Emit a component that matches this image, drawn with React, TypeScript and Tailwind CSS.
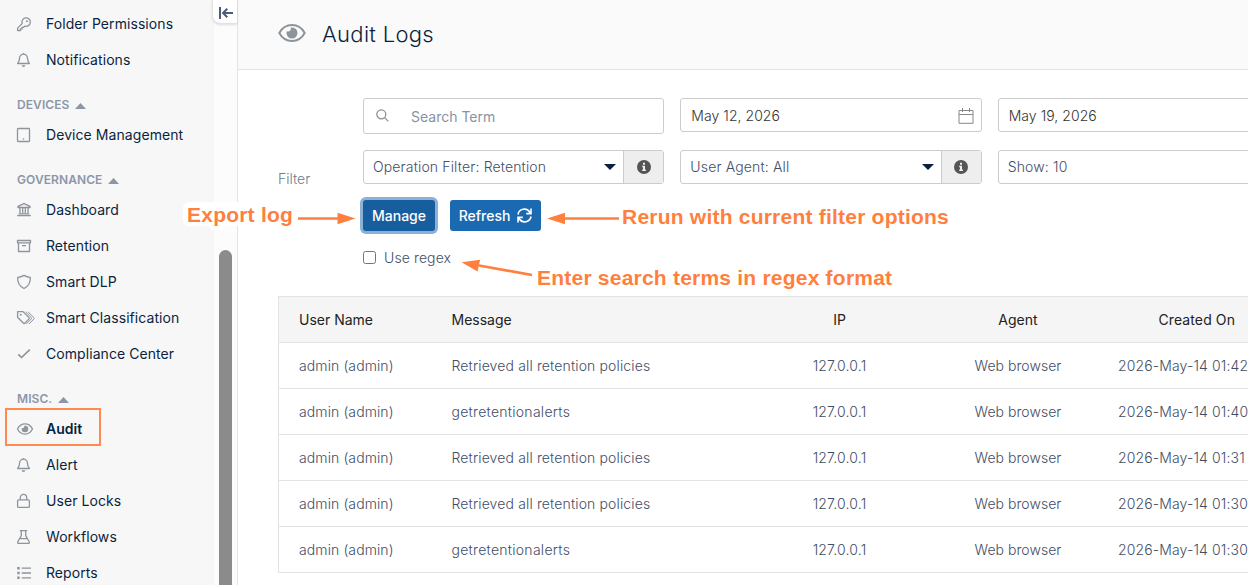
import React from "react";

type IconName =
  | "key"
  | "bell"
  | "tablet"
  | "landmark"
  | "archive"
  | "shield"
  | "tags"
  | "check"
  | "eye"
  | "lock"
  | "flask"
  | "list";

const icons: Record<IconName, React.ReactNode> = {
  key: (
    <>
      <path d="M6.2 7.600a4.200 4.200 0 1 1 2.600 2.500L7.600 11.300H6.100v1.600H4.500v1.600H1.600v-2.400z" />
      <circle cx="11" cy="5.200" r="1" fill="currentColor" stroke="none" />
    </>
  ),
  bell: (
    <>
      <path d="M7.500 1v1.200M7.500 2.200a4 4 0 0 0-4 4c0 2.500-.5 3.600-1.900 5.300h11.800c-1.400-1.700-1.900-2.800-1.900-5.300a4 4 0 0 0-4-4z" />
      <path d="M5.700 13.200h3.600a1.800 1.700 0 0 1-3.600 0z" fill="currentColor" stroke="none" />
    </>
  ),
  tablet: (
    <>
      <rect x="1.500" y="1.500" width="12" height="13" rx="0.800" />
      <path d="M6.800 12h1.400" />
    </>
  ),
  landmark: (
    <>
      <path d="M2 5.500V4.400L8 1.600l6 2.800v1.100zM1.200 13.600h13.600M2.500 11.800h11" />
      <path d="M4 6v5.500M6.700 6v5.500M9.300 6v5.500M12 6v5.500" />
    </>
  ),
  archive: (
    <path d="M1.500 2.500h13v2.400h-13zM2.500 5v8.500h11V5M6 7.600h4" />
  ),
  shield: (
    <path d="M8 1.400c1.800 1.200 3.800 1.900 6.300 2 .3 4.700-1.700 8.800-6.300 11.100C3.400 12.200 1.400 8.100 1.700 3.400c2.500-.1 4.500-.8 6.300-2z" />
  ),
  tags: (
    <>
      <path d="M1.600 1.600h5.400l6 6c.4.4.4.9 0 1.300l-4.200 4.300c-.4.4-.9.4-1.300 0l-5.900-6z" />
      <path d="M9.300 1.600l6 6c.4.4.4.9 0 1.300l-4.900 5M12 1.800l6 5.900c.4.4.4.8 0 1.200l-4.900 5" strokeWidth="1" />
      <circle cx="4.700" cy="4.700" r="1" fill="currentColor" stroke="none" />
    </>
  ),
  check: <path d="M2.300 8.300l3.200 3.200 8.300-7.900" strokeWidth="1.700" />,
  eye: (
    <>
      <path d="M1.500 8C3 5 5.700 2.900 9 2.900S15 5 16.500 8C15 11 12.300 13.100 9 13.100S3 11 1.500 8z" />
      <path d="M9 4.700A3.300 3.300 0 1 1 5.700 8c0-.3 0-.6.1-.9 1.500.5 3-.8 2.400-2.300.3-.1.500-.1.800-.1z" fill="currentColor" stroke="none" />
    </>
  ),
  lock: (
    <>
      <rect x="1.600" y="6.800" width="11.800" height="7.600" rx="1" />
      <path d="M4.300 6.800V4.600a3.200 3.200 0 0 1 6.400 0v2.200" />
    </>
  ),
  flask: (
    <path d="M3.800 1.600h7.400M5.300 1.600v5L1.800 12.800c-.4.8 0 1.600.9 1.600h9.600c.9 0 1.300-.8.900-1.600L9.700 6.600v-5M4 9.600h7" />
  ),
  list: (
    <>
      <path d="M5.700 3.200h9.300M5.700 8H15M5.700 12.800H15" />
      <path d="M1.200 2h2.500v2.400H1.200zM1.200 6.800h2.500v2.400H1.200zM1.200 11.600h2.500V14H1.200z" fill="currentColor" stroke="none" />
    </>
  ),
};

const SideIcon = ({ name }: { name: IconName }) => (
  <svg
    className="w-5 h-4 mr-2.5 shrink-0 text-[#8d949c]"
    viewBox="0 0 20 16"
    fill="none"
    stroke="currentColor"
    strokeWidth="1.300"
    strokeLinejoin="round"
  >
    {icons[name]}
  </svg>
);

const sections: { title?: string; items: { label: string; icon: IconName }[] }[] = [
  {
    items: [
      { label: "Folder Permissions", icon: "key" },
      { label: "Notifications", icon: "bell" },
    ],
  },
  { title: "DEVICES", items: [{ label: "Device Management", icon: "tablet" }] },
  {
    title: "GOVERNANCE",
    items: [
      { label: "Dashboard", icon: "landmark" },
      { label: "Retention", icon: "archive" },
      { label: "Smart DLP", icon: "shield" },
      { label: "Smart Classification", icon: "tags" },
      { label: "Compliance Center", icon: "check" },
    ],
  },
  {
    title: "MISC.",
    items: [
      { label: "Audit", icon: "eye" },
      { label: "Alert", icon: "bell" },
      { label: "User Locks", icon: "lock" },
      { label: "Workflows", icon: "flask" },
      { label: "Reports", icon: "list" },
    ],
  },
];

const logs = [
  { message: "Retrieved all retention policies", created: "2026-May-14 01:42" },
  { message: "getretentionalerts", created: "2026-May-14 01:40" },
  { message: "Retrieved all retention policies", created: "2026-May-14 01:31" },
  { message: "Retrieved all retention policies", created: "2026-May-14 01:30" },
  { message: "getretentionalerts", created: "2026-May-14 01:30" },
];

const Sidebar = () => (
  <aside className="relative flex w-[238px] shrink-0 border-r border-[#e3e3e3] bg-[#fcfcfc]">
    <nav className="w-[214px] bg-[#f7f7f7] pt-1.5">
      {sections.map((section, i) => (
        <div key={i}>
          {section.title && (
            <div className="flex h-[39px] items-center pl-[17px] pt-[15px] text-xs font-semibold tracking-[0.08px] text-[#8c96a8]">
              {section.title}
              <svg className="ml-1.5 mt-0.5 h-1.5 w-[11px]" viewBox="0 0 11 6">
                <path d="M0 6 5.500 0 11 6z" fill="currentColor" />
              </svg>
            </div>
          )}
          {section.items.map((item) => (
            <div
              key={item.label}
              className={
                item.label === "Audit"
                  ? "flex h-9 items-center pl-4 font-semibold text-[#0b1f3f]"
                  : "flex h-9 items-center pl-4 tracking-[0.07px] text-[#0b1f3f]"
              }
            >
              <SideIcon name={item.icon} />
              {item.label}
            </div>
          ))}
        </div>
      ))}
    </nav>
    <div className="ml-[5px] mt-[250px] w-[13px] rounded-t-full bg-[#8b8b8b]" />
    <button className="absolute right-0 top-0 flex h-6 w-[25px] items-center justify-center rounded-bl-lg border-b border-l border-[#e3e3e3] bg-white pl-0.5 pt-0.5 shadow-sm">
      <svg className="h-3.5 w-4" viewBox="0 0 16 14" fill="none" stroke="#4b5c7a" strokeWidth="2">
        <path d="M2 1v12M15 7H5.500M9.300 2.700 5 7l4.300 4.300" />
      </svg>
    </button>
  </aside>
);

const Select = ({ label, info = false }: { label: string; info?: boolean }) => (
  <div className="flex h-[34px] rounded-[3px] border border-[#ccc] bg-white">
    <div className="flex flex-1 items-center justify-between pl-[9px] pr-[7px] tracking-[0.15px]">
      {label}
      <svg className="h-1.5 w-3" viewBox="0 0 12 6">
        <path d="M0 0h12L6 6z" fill="#0b1f3f" />
      </svg>
    </div>
    {info && (
      <div className="flex w-10 items-center justify-center border-l border-[#ccc] bg-[#eee]">
        <svg className="h-3.5 w-3.5" viewBox="0 0 14 14">
          <circle cx="7" cy="7" r="7" fill="#555" />
          <path d="M6 2.700h2v2H6zM5.200 5.700H8v3.800h.9V11H5.200V9.500H6V7.200h-.8z" fill="#eee" />
        </svg>
      </div>
    )}
  </div>
);

const Filters = () => (
  <div className="flex pt-7 font-light text-[#3f4e66]">
    <div className="flex w-[85px] shrink-0 items-center pb-2 text-[#6f7b89]">Filter</div>
    <div className="w-[936px] shrink-0">
      <div className="grid h-[52px] grid-cols-3 items-start gap-4">
        <div className="flex h-9 items-center rounded-[3px] border border-[#ccc] bg-white pl-3 pt-0.5 text-[#8793a5]">
          <svg className="-mt-1 mr-[22px] h-[13px] w-[13px]" viewBox="0 0 13 13" fill="none" stroke="#8d949c" strokeWidth="1.300">
            <circle cx="5.300" cy="5.300" r="4.500" />
            <path d="m8.600 8.600 3.800 3.800" />
          </svg>
          <span className="font-normal">Search Term</span>
        </div>
        <div className="flex h-[34px] items-center justify-between rounded-[3px] border border-[#ccc] bg-white pl-2.5 pr-[7px] pt-0.5 text-[#333] tracking-[0.05px]">
          May 12, 2026
          <svg className="h-4 w-4" viewBox="0 0 16 16" fill="none" stroke="#888">
            <path d="M1 2.500h14v12.800H1zM1 6.500h14M4.500 0v4M11.500 0v4" />
          </svg>
        </div>
        <div className="flex h-[34px] items-center rounded-[3px] border border-[#ccc] bg-white pl-2.5 pt-0.5 text-[#333] tracking-[0.05px]">
          May 19, 2026
        </div>
      </div>
      <div className="grid grid-cols-3 gap-4">
        <Select label="Operation Filter: Retention" info />
        <Select label="User Agent: All" info />
        <Select label="Show: 10" />
      </div>
      <div className="mt-4 flex gap-[15px] font-medium text-white">
        <button className="h-[31px] w-[72px] rounded-[3px] bg-[#175e9e] ring-3 ring-[#8bb1d6]">Manage</button>
        <button className="flex h-[31px] w-[91px] items-center justify-center gap-[7px] rounded-[3px] bg-[#1a69b1]">
          Refresh
          <svg className="h-[15px] w-[15px]" viewBox="0 0 15 15" fill="none" stroke="currentColor" strokeWidth="1.600">
            <path d="M1 6.500A6.400 6.400 0 0 1 12.600 4L14 5.500M14 .6v5H9.200M14 8.500A6.400 6.400 0 0 1 2.400 11L1 9.500M1 14.400v-5h4.800" />
          </svg>
        </button>
      </div>
      <label className="mt-4 flex h-[21px] items-center tracking-[0.1px]">
        <input type="checkbox" className="mr-2 h-[13px] w-[13px]" />
        Use regex
      </label>
    </div>
  </div>
);

const LogTable = () => (
  <table className="mt-7 w-[1022px] table-fixed border-collapse border border-[#e3e3e3] text-[#3f4e66]">
    <colgroup>
      <col className="w-[153px]" />
      <col className="w-[319px]" />
      <col className="w-[178px]" />
      <col className="w-[179px]" />
      <col />
    </colgroup>
    <thead>
      <tr className="h-[46px] border-b border-[#e3e3e3] bg-[#f5f5f5] text-[#222]">
        <th className="pl-5 text-left font-normal">User Name</th>
        <th className="pl-5 text-left font-normal">Message</th>
        <th className="font-normal">IP</th>
        <th className="font-normal">Agent</th>
        <th className="pl-[51px] text-left font-normal tracking-[0.1px]">Created On</th>
      </tr>
    </thead>
    <tbody className="font-light">
      {logs.map((log, i) => (
        <tr key={i} className="h-[46px] border-b border-[#e3e3e3]">
          <td className="pl-5 tracking-[0.1px]">admin (admin)</td>
          <td className={log.message === "getretentionalerts" ? "pl-5 tracking-[0.28px]" : "pl-5 tracking-[0.14px]"}>
            {log.message}
          </td>
          <td className="text-center tracking-[0.16px]">127.0.0.1</td>
          <td className="text-center tracking-[0.05px]">Web browser</td>
          <td className="pl-[10.5px] whitespace-nowrap tracking-[0.13px]">{log.created}</td>
        </tr>
      ))}
    </tbody>
  </table>
);

// callouts drawn over the page
const Annotations = () => (
  <div className="pointer-events-none absolute inset-0 font-['Liberation_Sans',Arial,sans-serif] text-[21px] font-bold leading-6 tracking-[0.22px] text-[#ff7f3f] whitespace-nowrap">
    <div className="absolute left-[5px] top-[408px] h-[38px] w-[96px] border-2 border-[#ff8a50]" />
    <span className="absolute left-[183px] top-[202px] h-6 w-[112px] rounded-md bg-white" />
    <span className="absolute left-[209px] top-[210px] h-[21px] w-[17px] rounded-md bg-white" />
    <span className="absolute left-[187px] top-[203px]">Export log</span>
    <span className="absolute left-[622px] top-[205px]">Rerun with current filter options</span>
    <span className="absolute left-[537px] top-[266px]">Enter search terms in regex format</span>
    <svg className="absolute inset-0 h-full w-full" fill="#ff7f3f" stroke="#ff7f3f" strokeWidth="0">
      <path d="M298 218.500h42M564 218.500h55M479 265.500 532 275" strokeWidth="2.700" />
      <path d="M355.500 218.500 337.500 212.700v11.600zM547 218.500l18-5.800v11.600zM461.500 262.300l18.600-2.500-2.500 11.600z" />
    </svg>
  </div>
);

const App = () => {
  return (
    <div className="relative flex h-[585px] w-[1248px] overflow-hidden bg-white font-['Inter',sans-serif] text-sm">
      <Sidebar />
      <main className="min-w-0 flex-1 overflow-hidden">
        <header className="flex h-[70px] items-center border-b border-[#e3e3e3] bg-[#fafafa] pl-10">
          <svg className="-mt-1 h-5 w-7 text-[#8d949c]" viewBox="0 0 28 20" fill="none" stroke="currentColor" strokeWidth="2">
            <path d="M1.300 10C4 5 8.300 2 14 2s10 3 12.700 8C24 15 19.700 18 14 18S4 15 1.300 10z" />
            <path d="M14 4.500A5.500 5.500 0 1 1 8.500 10c0-.6.100-1.100.3-1.700 2.400.8 4.800-1.200 3.900-3.600.4-.1.900-.2 1.300-.2z" fill="currentColor" stroke="none" />
          </svg>
          <h1 className="ml-4 text-[22px] font-light tracking-[0.3px] text-[#0b1f3f]">Audit Logs</h1>
        </header>
        <div className="pl-10">
          <Filters />
          <LogTable />
        </div>
      </main>
      <Annotations />
    </div>
  );
};

export default App;
